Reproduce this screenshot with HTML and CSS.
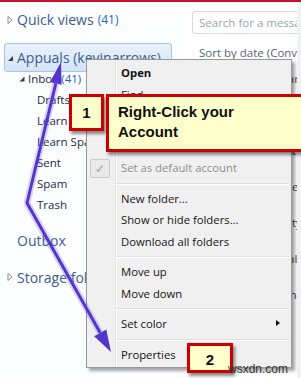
FILE: index.html
```html
<!DOCTYPE html>
<html lang="en">
<head>
    <meta charset="UTF-8">
    <meta name="viewport" content="width=device-width, initial-scale=1.0">
    <title>Account properties</title>
    <link rel="stylesheet" href="styles.css">
</head>
<body>
    <div class="window">
        <!-- Folder tree -->
        <nav class="folders">
            <div class="node top quick">
                <svg class="twisty" viewBox="0 0 8 8"><path d="M2 0.5 L6 4 L2 7.5 Z" fill="none" stroke="#8c8c8c"/></svg>
                Quick views<span class="count">(41)</span>
            </div>
            <div class="node top account">
                <svg class="twisty" viewBox="0 0 8 8"><path d="M7 2 L7 7 L2 7 Z" fill="#3c3c3c"/></svg>
                Appuals (kevinarrows)
            </div>
            <div class="node inbox">
                <svg class="twisty small" viewBox="0 0 6 6"><path d="M5.5 0.5 L5.5 5.5 L0.5 5.5 Z" fill="#3c3c3c"/></svg>
                Inbox<span class="count">(41)</span>
            </div>
            <div class="node leaf">Drafts</div>
            <div class="node leaf">Learn</div>
            <div class="node leaf">Learn Spam</div>
            <div class="node leaf">Sent</div>
            <div class="node leaf">Spam</div>
            <div class="node leaf">Trash</div>
            <div class="node top outbox">Outbox</div>
            <div class="node top storage">
                <svg class="twisty" viewBox="0 0 8 8"><path d="M2 0.5 L6 4 L2 7.5 Z" fill="none" stroke="#8c8c8c"/></svg>
                Storage folders
            </div>
        </nav>

        <!-- Message list -->
        <section class="messages">
            <div class="search">Search for a message</div>
            <div class="sort">Sort by date (Conversations)</div>
            <div class="msg">Windows Live Team</div>
            <div class="msg">Getting started with Windows Live Mail</div>
            <div class="msg">Learn more about your file [2]</div>
            <div class="msg">Important: Update your account settings</div>
            <div class="msg">New sign-in activity</div>
            <div class="msg">Your size limit is almost reached</div>
            <div class="msg">Welcome to the message centre</div>
        </section>
        <div class="edge"></div>
    </div>

    <!-- Context menu -->
    <ul class="context-menu">
        <li class="item bold">Open</li>
        <li class="item">Find</li>
        <li class="item">Remove account</li>
        <li class="item">Mark all as read</li>
        <li class="sep"></li>
        <li class="item disabled"><span class="check">&#10003;</span>Set as default account</li>
        <li class="sep"></li>
        <li class="item">New folder...</li>
        <li class="item">Show or hide folders...</li>
        <li class="item">Download all folders</li>
        <li class="sep"></li>
        <li class="item">Move up</li>
        <li class="item">Move down</li>
        <li class="sep"></li>
        <li class="item">Set color<span class="sub-arrow"></span></li>
        <li class="sep"></li>
        <li class="item">Properties</li>
    </ul>

    <!-- Step callouts -->
    <div class="callout step-num">1</div>
    <div class="callout step-text">Right-Click your<br>Account</div>
    <div class="callout step-two">2</div>
    <span class="watermark">wsxdn.com</span>

    <svg class="pointer" width="301" height="378" viewBox="0 0 301 378">
        <polyline points="55.8,83.4 27,203 100.2,332.8" fill="none" stroke="rgba(110,90,220,0.25)" stroke-width="7" stroke-linejoin="round"/>
        <polyline points="55.8,83.4 27,203 100.2,332.8" fill="none" stroke="#5436cc" stroke-width="3" stroke-linejoin="round"/>
        <polygon points="61,62 61.6,84.8 50,82" fill="#5436cc"/>
        <polygon points="111,352 106.3,329.4 94.1,336.2" fill="#5436cc"/>
    </svg>
</body>
</html>
```

FILE: styles.css
```css
* {
    box-sizing: border-box;
}
body {
    margin: 0;
    width: 301px;
    height: 378px;
    overflow: hidden;
    position: relative;
    background: #fff;
    border-top: 2px solid #c8102e;
    font-family: "Open Sans", "Noto Sans", sans-serif;
}
.window {
    display: flex;
    height: 376px;
}

/* folder tree */
.folders {
    width: 182px;
    flex: none;
    background: #fcfdfe;
}
.node {
    display: flex;
    align-items: center;
    white-space: nowrap;
}
.twisty {
    width: 8px;
    height: 8px;
    margin-right: 3px;
    flex: none;
}
.twisty.small {
    width: 6px;
    height: 6px;
}
.top {
    font-size: 14px;
    color: #3d5d8e;
    padding-left: 6px;
}
.quick {
    height: 35px;
    margin-bottom: 6px;
}
.account {
    height: 29px;
    margin: 0 10px 0 4px;
    padding-left: 1px;
    border: 1px solid #aac4e5;
    border-radius: 3px;
    background: linear-gradient(#eaf2fc, #d3e4f7);
}
.inbox {
    height: 21px;
    margin-top: -4px;
    padding-left: 19px;
    font-size: 11.5px;
    color: #1d2b45;
}
.leaf {
    height: 21px;
    padding-left: 37px;
    font-size: 11.5px;
    color: #1d2b45;
}
.outbox {
    height: 28px;
    margin-top: 11px;
    padding-left: 17px;
}
.storage {
    height: 28px;
    margin-top: 9px;
}
.count {
    font-size: 12px;
    color: #2462c2;
    margin-left: 4px;
}
.inbox .count {
    font-size: 11.5px;
    margin-left: 3px;
}

/* message list */
.messages {
    flex: 1;
    padding: 9px 0 0 10px;
    overflow: hidden;
    white-space: nowrap;
}
.search {
    width: 130px;
    height: 23px;
    padding: 0 6px;
    border: 1px solid #d3d9e1;
    border-radius: 3px;
    font-size: 11.5px;
    line-height: 21px;
    color: #9ba4b0;
}
.sort {
    margin-top: 11px;
    padding-left: 7px;
    font-size: 11.5px;
    line-height: 16px;
    color: #5b6472;
}
.msg {
    padding-left: 7px;
    font-size: 11.5px;
    line-height: 36px;
    color: #444;
}
.edge {
    width: 4px;
    flex: none;
    background: #eff1f3;
}

/* context menu */
.context-menu {
    position: absolute;
    left: 86px;
    top: 57px;
    width: 206px;
    margin: 0;
    padding: 2px;
    list-style: none;
    border: 1px solid #979797;
    background-color: #f0f0f0;
    background-image: linear-gradient(to right, transparent 28px, #e2e3e3 28px, #e2e3e3 29px, #fff 29px, #fff 30px, transparent 30px);
    box-shadow: 3px 3px 3px rgba(0, 0, 0, 0.35);
    font-size: 11.3px;
    color: #141414;
}
.item {
    position: relative;
    height: 21.5px;
    line-height: 21.5px;
    padding-left: 32px;
    white-space: nowrap;
}
.bold {
    font-weight: 700;
}
.disabled {
    color: #8d8d8d;
}
.sep {
    height: 9px;
    margin-left: 25px;
    background:
        linear-gradient(#e0e0e0, #e0e0e0) no-repeat 0 4px / 100% 1px,
        linear-gradient(#fff, #fff) no-repeat 0 5px / 100% 1px;
}
.check {
    position: absolute;
    left: 1px;
    top: 2px;
    width: 20px;
    height: 19px;
    border: 1px solid #cbcbcb;
    border-radius: 2px;
    background: #e9e9e9;
    color: #a0a0a0;
    font-size: 12px;
    line-height: 17px;
    text-align: center;
}
.sub-arrow {
    position: absolute;
    right: 9px;
    top: 7px;
    border-left: 4px solid #111;
    border-top: 3.5px solid transparent;
    border-bottom: 3.5px solid transparent;
}

/* callouts */
.callout {
    position: absolute;
    background: #ffffcc;
    border: 3px solid #cc0000;
    box-shadow: 2px 3px 3px rgba(0, 0, 0, 0.45);
    font-family: "Liberation Sans", Arial, sans-serif;
    font-weight: 700;
    font-size: 15px;
    color: #111;
}
.step-num {
    left: 69px;
    top: 92px;
    width: 35px;
    height: 37px;
    display: flex;
    align-items: center;
    justify-content: center;
}
.step-text {
    left: 106px;
    top: 92px;
    width: 200px;
    height: 58px;
    padding: 5px 0 0 9px;
    line-height: 20px;
}
.step-two {
    left: 187px;
    top: 341px;
    width: 46px;
    height: 30px;
    padding-top: 3px;
    display: flex;
    align-items: center;
    justify-content: center;
}
.watermark {
    position: absolute;
    left: 228px;
    top: 360px;
    font-family: "Liberation Sans", Arial, sans-serif;
    font-size: 12px;
    line-height: 14px;
    color: #333;
}
.pointer {
    position: absolute;
    left: 0;
    top: -2px;
    pointer-events: none;
}
```
